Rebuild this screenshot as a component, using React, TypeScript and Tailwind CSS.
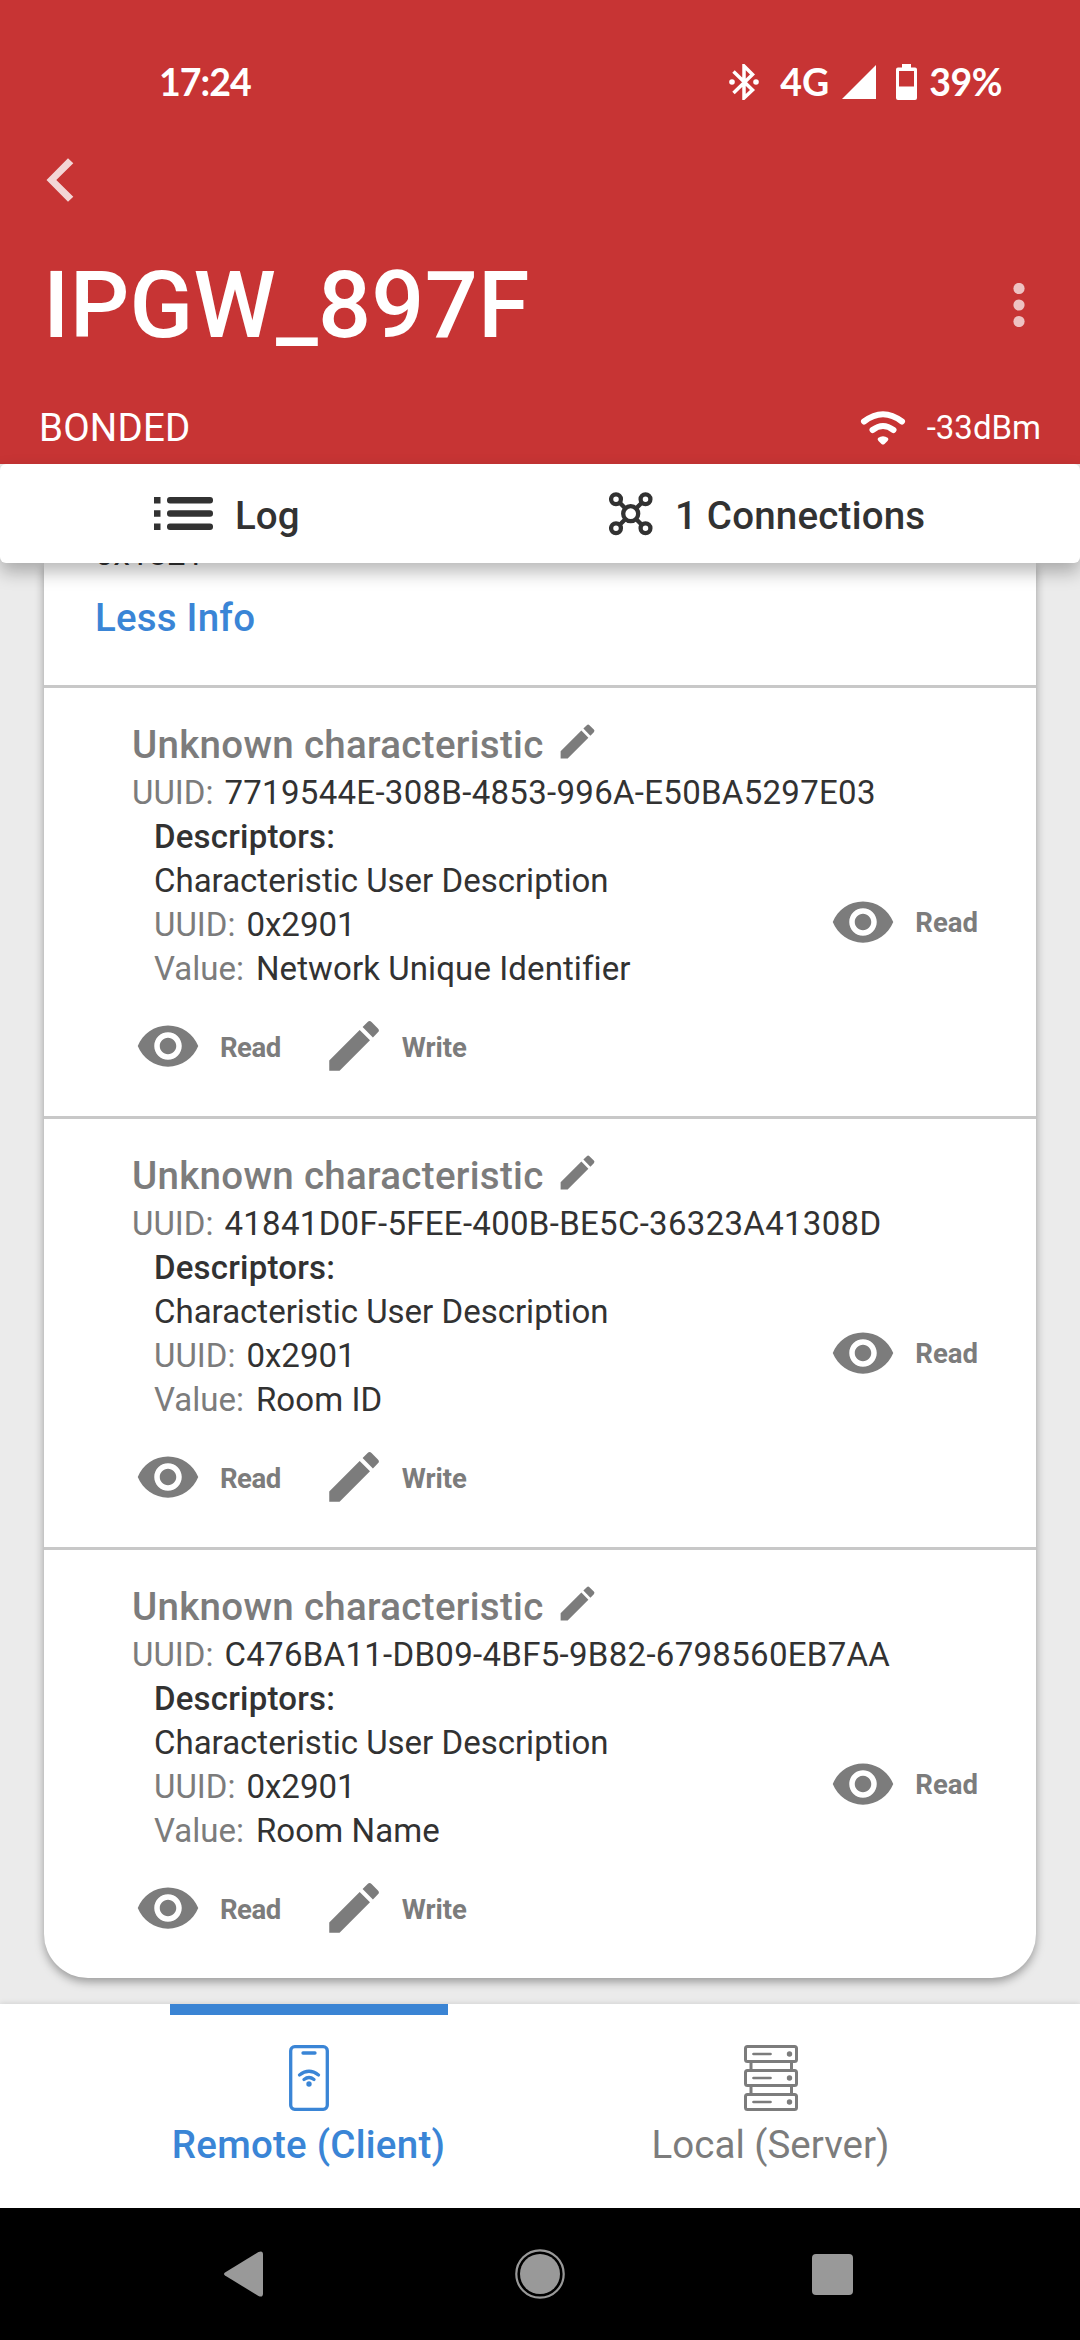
import React from "react";

const Svg = ({ w, h, vb, className = "", children }: { w: number; h: number; vb?: string; className?: string; children: React.ReactNode }) => (
  <svg width={w} height={h} viewBox={vb ?? `0 0 ${w} ${h}`} className={`block shrink-0 ${className}`} fill="currentColor">
    {children}
  </svg>
);

const Eye = () => (
  <Svg w={66} h={66} vb="0 0 24 24">
    <path d="M12 4.5C7 4.5 2.73 7.61 1 12c1.73 4.39 6 7.5 11 7.5s9.27-3.11 11-7.5c-1.73-4.39-6-7.5-11-7.5zM12 17c-2.76 0-5-2.24-5-5s2.24-5 5-5 5 2.24 5 5-2.24 5-5 5zm0-8c-1.66 0-3 1.34-3 3s1.34 3 3 3 3-1.34 3-3-1.34-3-3-3z" />
  </Svg>
);

const Pencil = ({ size }: { size: number }) => (
  <Svg w={size} h={size} vb="0 0 24 24">
    <path d="M3 17.25V21h3.75L17.81 9.94l-3.75-3.75L3 17.25zM20.71 7.04a.996.996 0 0 0 0-1.41l-2.34-2.34a.996.996 0 0 0-1.41 0l-1.83 1.83 3.75 3.75 1.83-1.83z" />
  </Svg>
);

const items = [
  { uuid: "7719544E-308B-4853-996A-E50BA5297E03", value: "Network Unique Identifier" },
  { uuid: "41841D0F-5FEE-400B-BE5C-36323A41308D", value: "Room ID" },
  { uuid: "C476BA11-DB09-4BF5-9B82-6798560EB7AA", value: "Room Name" },
];

function Characteristic({ uuid, value }: { uuid: string; value: string }) {
  return (
    <section className="h-[431px] shrink-0 border-t-[3px] border-[#c8c8c8] pt-[30px] pl-[88px] text-[33px] leading-[44px] text-[#323232]">
      <div className="flex h-[52px] items-center text-[38.5px] font-medium text-[#7c7c7c]">
        <span className="pt-px tracking-[0.3px]">Unknown characteristic</span>
        <div className="-mt-[6px] ml-[11px]"><Pencil size={45} /></div>
      </div>
      <div className="mt-[1px] flex gap-[11px] whitespace-nowrap">
        <span className="text-[#7c7c7c]">UUID:</span>
        <span className="tracking-[0.3px]">{uuid}</span>
      </div>
      <div className="flex justify-between pr-[58px] pl-[22px]">
        <div>
          <div className="font-medium tracking-[0.2px]">Descriptors:</div>
          <div>Characteristic User Description</div>
          <div className="flex gap-[11px]"><span className="text-[#7c7c7c]">UUID:</span><span>0x2901</span></div>
          <div className="flex gap-[12px]"><span className="text-[#7c7c7c]">Value:</span><span className="tracking-[0.1px]">{value}</span></div>
        </div>
        <div className="mt-[74px] flex h-[66px] items-center text-[27.5px] font-bold text-[#7c7c7c]">
          <Eye />
          <span className="ml-[19px] pt-[2px]">Read</span>
        </div>
      </div>
      <div className="mt-[22px] ml-[3px] flex h-[66px] items-center text-[27.5px] font-bold text-[#7c7c7c]">
        <Eye />
        <span className="ml-[19px] pt-[3px] tracking-[-0.5px]">Read</span>
        <div className="ml-[40px]"><Pencil size={66} /></div>
        <span className="ml-[15px] pt-[3px]">Write</span>
      </div>
    </section>
  );
}

export default function App() {
  return (
    <div className="flex h-[2340px] w-[1080px] flex-col overflow-hidden bg-[#ebebeb] font-['Roboto',sans-serif]">
      <header className="flex h-[464px] shrink-0 flex-col bg-[#c73434] text-white">
        <div className="flex h-[116px] items-center pt-[48px] pr-[78px] pl-[159px] font-['Lato',sans-serif] text-[37.5px] leading-[50px] font-bold">
          <span className="tracking-[-1px]">17:24</span>
          <div className="ml-auto flex items-center">
            <Svg w={30} h={36}>
              <path d="M4.5 7.500 L23.500 26 L15 34 V2 L23.500 10.500 L4.5 29" fill="none" stroke="currentColor" strokeWidth="3.500" />
              <circle cx="3" cy="18" r="2.8" />
              <circle cx="27" cy="18" r="2.8" />
            </Svg>
            <span className="ml-[21px]">4G</span>
            <Svg w={34} h={34} className="ml-[13px]"><path d="M34 0V34H0z" /></Svg>
            <Svg w={21} h={36} className="mr-[12px] ml-[20px]">
              <path fillRule="evenodd" d="M6 0h9v3.5h4a2 2 0 0 1 2 2V34a2 2 0 0 1-2 2H2a2 2 0 0 1-2-2V5.500a2 2 0 0 1 2-2h4zM3 7v15.500h15V7z" />
            </Svg>
            <span className="tracking-[-0.5px]">39%</span>
          </div>
        </div>
        <div className="flex h-[128px] pt-[42px] pl-[46px]">
          <Svg w={28} h={44} className="opacity-80"><path d="M22 0.300 27.300 5.300 10.300 22 27.300 38.700 22 43.700 0.500 22z" /></Svg>
        </div>
        <div className="flex h-[121px] items-center justify-between pr-[55px] pl-[43px]">
          <h1 className="text-[93.5px] leading-[110px] font-medium tracking-[0.2px]">IPGW_897F</h1>
          <Svg w={12} h={44} className="opacity-70">
            <circle cx="6" cy="5.500" r="5.600" /><circle cx="6" cy="22" r="5.600" /><circle cx="6" cy="38.500" r="5.600" />
          </Svg>
        </div>
        <div className="flex h-[99px] items-center pt-[26px] pr-[39px] pl-[39px]">
          <span className="text-[38.5px] leading-[44px] tracking-[0.2px]">BONDED</span>
          <Svg w={46} h={34} className="ml-auto">
            <g fill="none" stroke="currentColor" strokeWidth="6" strokeLinecap="round">
              <path d="M4 10.500Q23 -4 42 10.500" /><path d="M12.500 19Q23 11 33.500 19" />
            </g>
            <path d="M18 27q5-3.500 10 0q1 1.500-0.500 3l-3 3q-1.500 1-3 0l-3-3q-1.500-1.500-0.500-3z" />
          </Svg>
          <span className="ml-[21px] text-[33px] leading-[44px]">-33dBm</span>
        </div>
      </header>

      <nav className="relative z-10 flex h-[99px] shrink-0 items-center rounded-[6px] bg-white text-[38.5px] font-medium text-[#323232] shadow-[0_9px_18px_rgba(0,0,0,0.28)]">
        <div className="flex w-[540px] items-center pl-[154px]">
          <Svg w={59} h={33}>
            <path d="M0 0h6.500v6.500H0zM0 13.200h6.500v6.500H0zM0 26.500h6.500V33H0z" />
            <rect x="13" width="46" height="6.500" rx="3" /><rect x="13" y="13.200" width="46" height="6.500" rx="3" /><rect x="13" y="26.500" width="46" height="6.500" rx="3" />
          </Svg>
          <span className="ml-[22px] pt-[5px]">Log</span>
        </div>
        <div className="flex items-center pl-[69px]">
          <Svg w={44} h={44}>
            <g fill="none" stroke="currentColor" strokeWidth="4.300">
              <circle cx="7" cy="7.200" r="4.900" /><circle cx="36.500" cy="7.200" r="4.900" /><circle cx="7" cy="36.200" r="4.900" /><circle cx="36.500" cy="36.200" r="4.900" />
              <circle cx="21.700" cy="21.700" r="7.500" />
              <path d="M10.500 10.500l6 6M33 10.500l-6 6M10.500 33l6-6M33 33l-6-6" />
            </g>
          </Svg>
          <span className="ml-[22px] pt-[5px] tracking-[0.2px]">1 Connections</span>
        </div>
      </nav>

      <main className="h-[1441px] shrink-0 overflow-hidden px-[44px]">
        <div className="flex h-[1415px] flex-col rounded-b-[44px] bg-white shadow-[0_4px_10px_rgba(0,0,0,0.35)]">
          <div className="flex h-[122px] shrink-0 flex-col pl-[51px]">
            <div className="-mt-[31px] text-[33px] leading-[44px] text-[#323232]">0x1821</div>
            <div className="mt-[17px] text-[38.5px] leading-[50px] font-medium tracking-[0.2px] text-[#3a85d6]">Less Info</div>
          </div>
          {items.map((c) => <Characteristic key={c.uuid} {...c} />)}
        </div>
      </main>

      <nav className="flex h-[204px] shrink-0 bg-white pl-[149px] text-[38.5px] leading-[50px] shadow-[0_0_6px_rgba(0,0,0,0.14)]">
        <div className="flex w-[319px] flex-col items-center font-medium text-[#3a85d6]">
          <div className="h-[11px] w-[278px] bg-[#3a84d4]" />
          <Svg w={40} h={66} className="mt-[30px]">
            <g fill="none" stroke="currentColor" strokeWidth="3.300" strokeLinecap="round">
              <rect x="1.700" y="1.700" width="36.600" height="62.600" rx="4" />
              <path d="M14 8h12M10.500 30q9.500-7.500 19 0M15 34.500q5-4 10 0" />
            </g>
            <circle cx="20" cy="39" r="2.700" />
          </Svg>
          <span className="mt-[9px] tracking-[0.25px]">Remote (Client)</span>
        </div>
        <div className="ml-[143px] flex w-[319px] flex-col items-center pt-[41px] text-[#7c7c7c]">
          <Svg w={54} h={66}>
            <g fill="none" stroke="currentColor" strokeWidth="3">
              <rect x="1.500" y="1.500" width="51" height="15" rx="2" /><rect x="1.500" y="25.500" width="51" height="15" rx="2" /><rect x="1.500" y="49.500" width="51" height="15" rx="2" />
              <path d="M7 16.500v9M47.500 16.500v9M7 40.500v9M47.500 40.500v9" />
              <path strokeLinecap="round" strokeWidth="2.700" d="M9.500 9h17M9.500 33h17M9.500 57h17" />
            </g>
            <circle cx="45.500" cy="9" r="2.700" /><circle cx="45.500" cy="33" r="2.700" /><circle cx="45.500" cy="57" r="2.700" />
          </Svg>
          <span className="mt-[9px]">Local (Server)</span>
        </div>
      </nav>

      <footer className="flex h-[132px] shrink-0 items-center bg-black pl-[224px] text-[#999]">
        <Svg w={39} h={46}><path d="M1 21.500 34.500 1Q39 -1 39 3.500V42.500Q39 47 34.500 45L1 24.500Q-1 23 1 21.500z" /></Svg>
        <Svg w={50} h={50} className="ml-[252px]">
          <circle cx="25" cy="25" r="20" /><circle cx="25" cy="25" r="23.700" fill="none" stroke="currentColor" strokeWidth="2.200" />
        </Svg>
        <div className="ml-[247px] h-[41px] w-[41px] rounded-[4px] bg-[#999]" />
      </footer>
    </div>
  );
}
